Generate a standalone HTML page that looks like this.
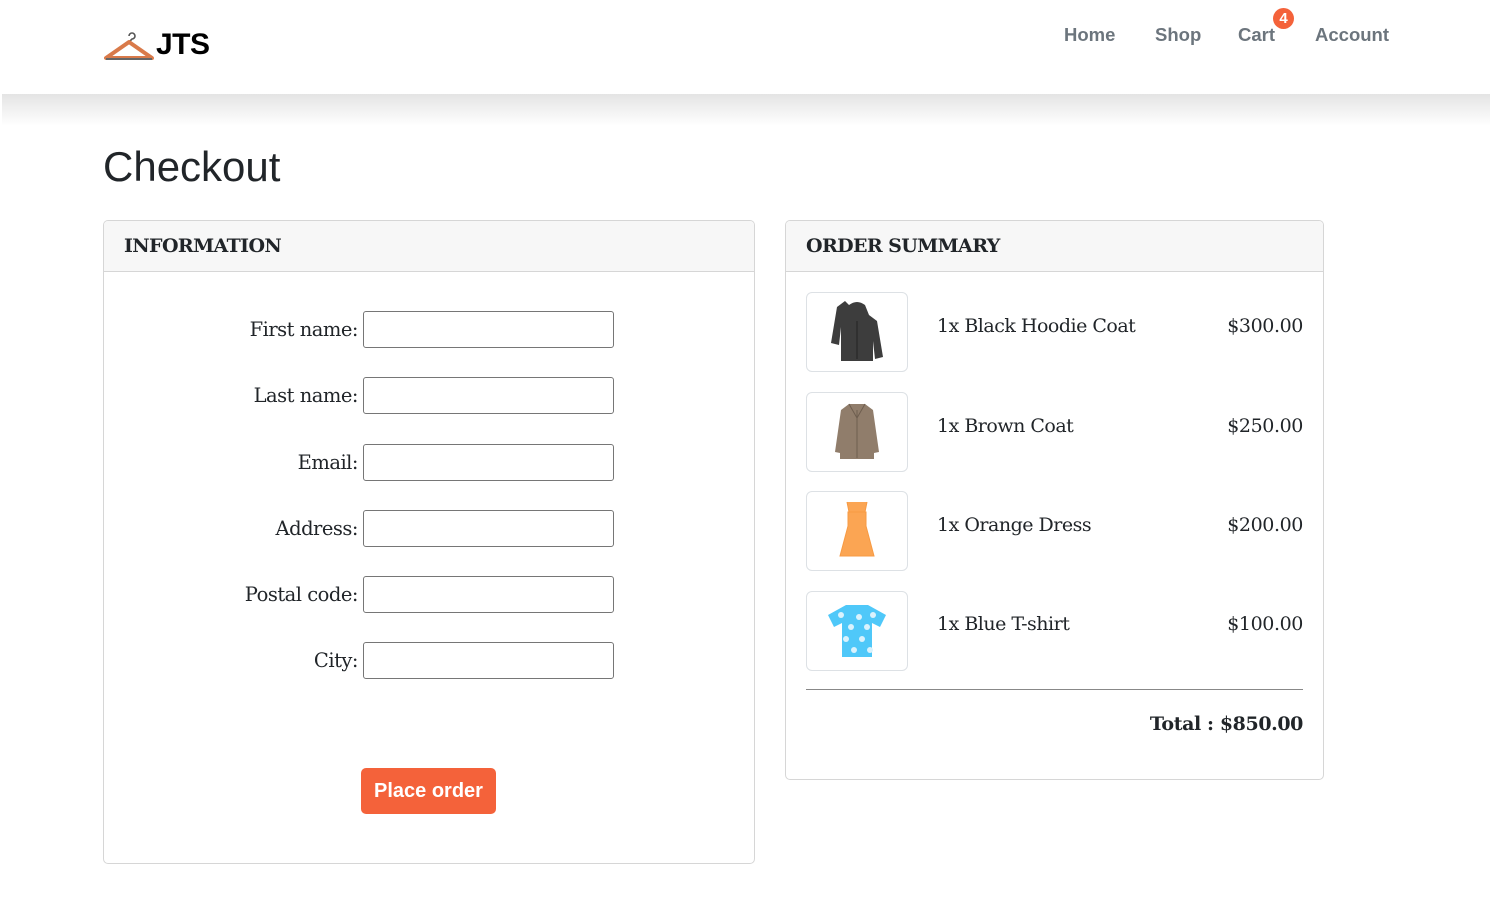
<!DOCTYPE html>
<html><head><meta charset="utf-8"><style>
*{box-sizing:border-box;margin:0;padding:0}
body{width:1491px;height:914px;background:#fff;position:relative;overflow:hidden;font-family:"DejaVu Serif","Liberation Serif",serif;color:#212529}
.nav{position:absolute;left:0;top:0;width:1491px;height:94px;background:#fff}
.shadow{position:absolute;left:2px;top:94px;width:1488px;height:32px;background:linear-gradient(#e4e4e4,#fff)}
.logo{position:absolute;left:104px;top:28px;font:bold 30px "Liberation Sans",sans-serif;color:#000;letter-spacing:-0.5px}
.nl{position:absolute;top:24px;font:bold 18.5px "Liberation Sans",sans-serif;color:#6c757d}
.badge{position:absolute;left:1273px;top:8px;width:21px;height:21px;border-radius:50%;background:#f4623a;color:#fff;font:bold 15px "Liberation Sans",sans-serif;text-align:center;line-height:21px}
h1{position:absolute;left:103px;top:143px;font:500 42px "Liberation Sans",sans-serif;color:#212529}
.card{position:absolute;border:1px solid #d6d6d6;border-radius:5px;background:#fff;overflow:hidden}
.ch{height:51px;background:#f7f7f7;border-bottom:1px solid #d6d6d6;padding:14px 20px;font:bold 19px "DejaVu Serif",serif;letter-spacing:-0.6px}
.lbl{position:absolute;right:396px;width:200px;text-align:right;font-size:19.5px;letter-spacing:-0.5px}
.in{position:absolute;left:259px;width:251px;height:37px;border:1px solid #767676;border-radius:3px}
.btn{position:absolute;left:257px;top:547px;width:135px;height:46px;background:#f4623a;border-radius:5px;color:#fff;font:bold 20px "Liberation Sans",sans-serif;text-align:center;line-height:46px}
.img{position:absolute;left:20px;width:102px;height:80px;border:1px solid #dde1e5;border-radius:6px;display:flex;align-items:center;justify-content:center}
.nm{position:absolute;left:151px;font-size:19px;letter-spacing:-0.5px}
.pr{position:absolute;right:20px;font-size:19px;letter-spacing:-0.4px}
</style></head><body>
<div class="nav">
<svg style="position:absolute;left:104px;top:32px" width="50" height="30" viewBox="0 0 50 30"><path d="M25 4a3 3 0 1 1 3 3l-3 3" fill="none" stroke="#555" stroke-width="1.6"/><path d="M25 10L2 26h46z" fill="none" stroke="#d97a4a" stroke-width="4" stroke-linejoin="round"/><path d="M2 27h46" stroke="#666" stroke-width="2"/></svg>
<div class="logo" style="left:156px">JTS</div>
<div class="nl" style="left:1064px">Home</div>
<div class="nl" style="left:1155px">Shop</div>
<div class="nl" style="left:1238px">Cart</div>
<div class="badge">4</div>
<div class="nl" style="left:1315px">Account</div>
</div>
<div class="shadow"></div>
<h1>Checkout</h1>
<div class="card" style="left:103px;top:220px;width:652px;height:644px">
<div class="ch">INFORMATION</div>
<div class="lbl" style="top:97px">First name:</div><div class="in" style="top:90px"></div>
<div class="lbl" style="top:163px">Last name:</div><div class="in" style="top:156px"></div>
<div class="lbl" style="top:230px">Email:</div><div class="in" style="top:223px"></div>
<div class="lbl" style="top:296px">Address:</div><div class="in" style="top:289px"></div>
<div class="lbl" style="top:362px">Postal code:</div><div class="in" style="top:355px"></div>
<div class="lbl" style="top:428px">City:</div><div class="in" style="top:421px"></div>
<div class="btn">Place order</div>
</div>
<div class="card" style="left:785px;top:220px;width:539px;height:560px">
<div class="ch">ORDER SUMMARY</div>
<div class="img" style="top:71px"><svg width="60" height="62" viewBox="0 0 60 62"><path d="M22 4q8-6 16 0l4 10 8 6 6 36-8 2-2-18v20H14V26l-2 18-8-2 6-36 8-6z" fill="#3d3d3d"/><path d="M30 20v38" stroke="#222" stroke-width="1"/></svg></div>
<div class="nm" style="top:94px">1x Black Hoodie Coat</div><div class="pr" style="top:94px">$300.00</div>
<div class="img" style="top:171px"><svg width="50" height="60" viewBox="0 0 50 60"><path d="M17 2h16l8 6 6 42-5 1v6H8v-6l-5-1 6-42z" fill="#907d6b"/><path d="M25 8v48M17 2l8 14 8-14" stroke="#6e5e4f" fill="none"/></svg></div>
<div class="nm" style="top:194px">1x Brown Coat</div><div class="pr" style="top:194px">$250.00</div>
<div class="img" style="top:270px"><svg width="40" height="62" viewBox="0 0 40 62"><path d="M10 2l2 10h16l2-10M11 12h18v14l8 30H3l8-30z" fill="#fba553" stroke="#f79a43"/></svg></div>
<div class="nm" style="top:293px">1x Orange Dress</div><div class="pr" style="top:293px">$200.00</div>
<div class="img" style="top:370px"><svg width="62" height="56" viewBox="0 0 62 56"><path d="M20 2h22l18 10-6 12-8-4v34H16V20l-8 4-6-12z" fill="#4fc8f9"/><g fill="#d9f2fd"><circle cx="15" cy="12" r="3"/><circle cx="33" cy="14" r="3"/><circle cx="47" cy="12" r="3"/><circle cx="25" cy="24" r="3"/><circle cx="41" cy="24" r="3"/><circle cx="20" cy="36" r="3"/><circle cx="36" cy="36" r="3"/><circle cx="28" cy="47" r="3"/><circle cx="44" cy="47" r="3"/></g></svg></div>
<div class="nm" style="top:392px">1x Blue T-shirt</div><div class="pr" style="top:392px">$100.00</div>
<div style="position:absolute;left:20px;right:20px;top:468px;border-top:1px solid #888"></div>
<div class="pr" style="top:492px;font-weight:bold">Total : $850.00</div>
</div>
</body></html>
